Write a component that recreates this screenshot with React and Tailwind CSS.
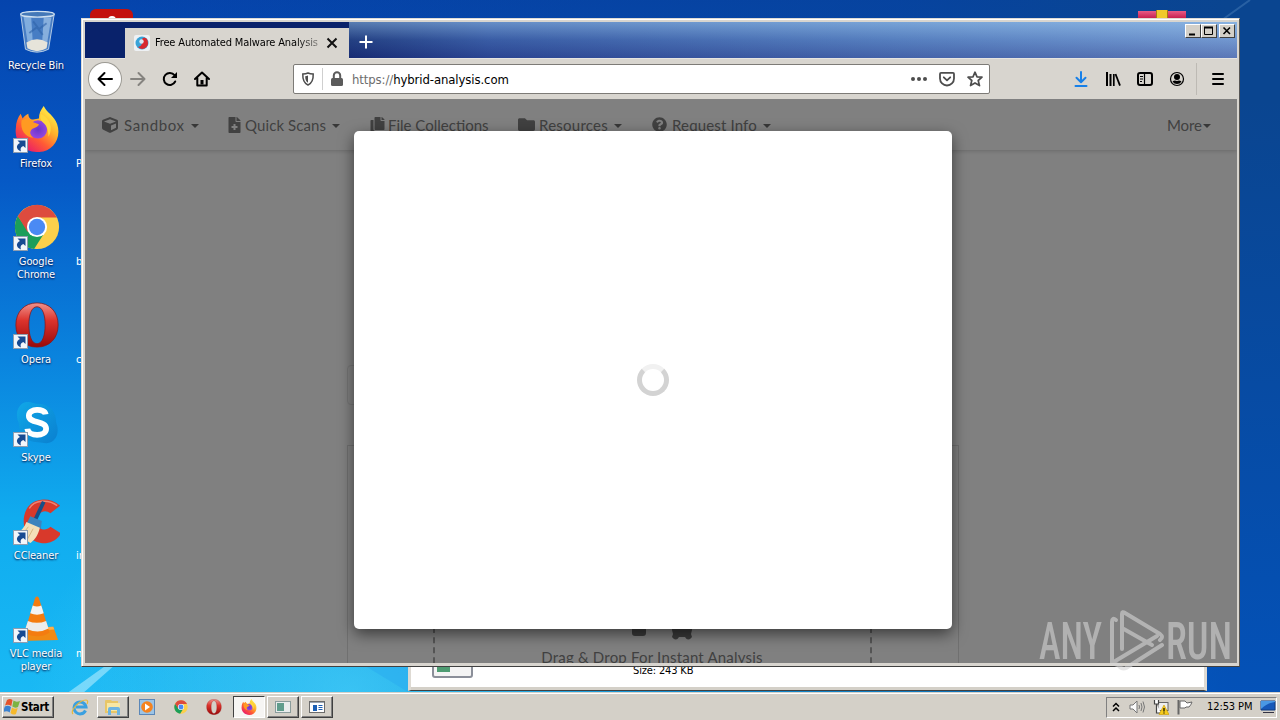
import { FaCube, FaFileMedical, FaCopy, FaFolder, FaQuestionCircle } from 'react-icons/fa'

const shortcuts = [
  { icon: RecycleIcon, label: 'Recycle Bin', link: false },
  { icon: FirefoxIcon, label: 'Firefox', link: true },
  { icon: ChromeIcon, label: 'Google Chrome', link: true },
  { icon: OperaIcon, label: 'Opera', link: true },
  { icon: SkypeIcon, label: 'Skype', link: true },
  { icon: CCleanerIcon, label: 'CCleaner', link: true },
  { icon: VlcIcon, label: 'VLC media player', link: true },
]

const secondColumn = ['', 'P', 'b', 'c', '', 'in', 'm']

function RecycleIcon() {
  return (
    <svg viewBox="0 0 48 48" className="w-12 h-12">
      <path d="M7 6 L12 43 Q24 50 36 43 L42 6 Z" fill="#5d8fca" fillOpacity=".75" />
      <path d="M10 9 L15 41 L20 43 L18 10 Z" fill="#a9cdf0" fillOpacity=".6" />
      <path d="M31 10 L29 42 L34 40 L39 10 Z" fill="#bdd9f3" fillOpacity=".55" />
      <path d="M20 14 L26 22 L34 16 M16 26 L24 20 L30 28" stroke="#2f62a8" strokeWidth="2" fill="none" opacity=".6" />
      <path d="M13 36 Q24 29 35 36 L34 42 Q24 48 14 42 Z" fill="#e6e4da" />
      <ellipse cx="24.5" cy="6.5" rx="17.5" ry="3" fill="#4478b8" stroke="#cfe0f0" strokeWidth="1.3" />
      <path d="M7 6 L12 43 Q24 49 36 43 L42 6" fill="none" stroke="#b9cfe6" strokeWidth="1" />
    </svg>
  )
}

function FirefoxIcon({ className = 'w-12 h-12' }) {
  return (
    <svg viewBox="0 0 48 48" className={className}>
      <defs>
        <linearGradient id="ffBody" x1=".85" y1=".1" x2=".2" y2=".95">
          <stop offset="0" stopColor="#fff04a" />
          <stop offset=".35" stopColor="#ffb02a" />
          <stop offset=".65" stopColor="#ff5a35" />
          <stop offset="1" stopColor="#e8186e" />
        </linearGradient>
        <radialGradient id="ffGlobe">
          <stop offset="0" stopColor="#6a35c8" />
          <stop offset="1" stopColor="#9448e0" />
        </radialGradient>
      </defs>
      <path d="M31 0 C34 7 42 10 45 19 C50 34 40 48 25 48 C10 48 0 37 2 23 C2 17 4 12 7 8 L9 13 C11 10 13 9 15 8 C15 12 17 14 20 14 L26 13 C26 8 28 4 31 0Z" fill="url(#ffBody)" />
      <circle cx="25" cy="24.500" r="9.500" fill="url(#ffGlobe)" />
      <path d="M8 15 C13 12 18 14 20 17 L26 19 C25 23 20 22 18 25 C16 28 17 30 20 33 C12 33 6 25 8 15Z" fill="#ff9a22" />
      <path d="M28 8 C38 13 41 23 36 32 C36 25 34 20 30 17 C27 14 27 11 28 8Z" fill="#ffd83c" />
    </svg>
  )
}

function ChromeIcon({ className = 'w-12 h-12' }) {
  return (
    <svg viewBox="0 0 48 48" className={className}>
      <circle cx="24" cy="24" r="23" fill="#fcd04b" />
      <path d="M4 12.500 A23 23 0 0 0 21 46.800 L32.500 29 L24 24 L15.600 29 Z" fill="#1b9e5a" />
      <path d="M4 12.500 L14 29 L24 24 L24 14 L44.700 14 A23 23 0 0 0 4 12.500Z" fill="#dd4b3e" />
      <circle cx="24" cy="24" r="10.500" fill="#fff" />
      <circle cx="24" cy="24" r="8.500" fill="#4a8af4" />
    </svg>
  )
}

function OperaIcon({ className = 'w-12 h-12' }) {
  return (
    <svg viewBox="0 0 48 48" className={className}>
      <defs>
        <linearGradient id="operaRed" x1="0" y1="0" x2="0" y2="1">
          <stop offset="0" stopColor="#f0938c" />
          <stop offset=".4" stopColor="#dc332c" />
          <stop offset="1" stopColor="#98090b" />
        </linearGradient>
      </defs>
      <path fillRule="evenodd" d="M24 1 C37 1 46 10 46 24 C46 38 37 47 24 47 C11 47 2 38 2 24 C2 10 11 1 24 1Z M24 5 C18 5 15.500 14 15.500 24 C15.500 34 18 43.500 24 43.500 C30 43.500 32.500 34 32.500 24 C32.500 14 30 5 24 5Z" fill="url(#operaRed)" stroke="#8d1515" strokeWidth=".8" />
    </svg>
  )
}

function SkypeIcon() {
  return (
    <svg viewBox="0 0 48 48" className="w-12 h-12">
      <defs>
        <linearGradient id="skypeBlue" x1="0" y1="0" x2="1" y2="1">
          <stop offset="0" stopColor="#10a8e8" />
          <stop offset="1" stopColor="#0a80d0" />
        </linearGradient>
      </defs>
      <path d="M14 2 C19 2 21 4 25 4 C37 4 44 12 44 24 C48 33 44 45 34 45 C30 45 29 44 25 44 C12 44 5 35 5 24 C0 14 5 2 14 2Z" fill="url(#skypeBlue)" />
      <path d="M33 15 C32 8.500 15.500 8.500 15.500 16.500 C15.500 25 33.500 21 33.500 30 C33.500 38.500 15 38.500 14 30" fill="none" stroke="#fff" strokeWidth="6" />
    </svg>
  )
}

function CCleanerIcon() {
  return (
    <svg viewBox="0 0 48 48" className="w-12 h-12">
      <path d="M48 8 C37 -2 19 0 13 12 C6 26 12 45 28 47 C36 48 44 45 49 37 L38 30 C32 36 24 32 24 24 C24 15 32 11 38 16 Z" fill="#d8392b" />
      <path d="M45 8 C36 1 21 2 16 11" stroke="#ee8574" strokeWidth="1.500" fill="none" />
      <path d="M31 4 L22 23" stroke="#174f87" strokeWidth="4" />
      <path d="M17 19 L29 24 L28 32 L13 27Z" fill="#3d83bd" />
      <path d="M13 25 L27 31 C25 40 20 45 17 47 L3 37 C8 34 11 30 13 25Z" fill="#f4dfb8" />
      <path d="M15 30 L8 39 M20 32 L14 43" stroke="#d7b680" strokeWidth="1" />
    </svg>
  )
}

function VlcIcon() {
  return (
    <svg viewBox="0 0 48 48" className="w-12 h-12">
      <path d="M6 34 L41 32 L46 46 L8 47Z" fill="#f08a14" />
      <path d="M6 34 L41 32 L42 35 L7 37Z" fill="#ffb04a" />
      <path d="M22 2 Q24 -1 26 2 L37 38 Q25 46 11 38Z" fill="#f47c10" />
      <path d="M19.500 10 Q24 12 28.500 10 L31 18 Q24 21 17 18Z" fill="#f3f3f3" />
      <path d="M14.500 26 Q24 30 33.500 26 L36 34 Q25 40 12 34Z" fill="#ececec" />
    </svg>
  )
}

function ShortcutArrow() {
  return (
    <svg viewBox="0 0 15 15" className="absolute left-0 bottom-0 w-[15px] h-[15px]">
      <rect x=".5" y=".5" width="14" height="14" fill="#f2f6fb" stroke="#8e9db0" />
      <path d="M4.500 2.500 L12.500 2.500 L12.500 10 L10.300 8 C7.500 9 7.200 11 8 13.500 C2.500 11 3 7 7 5Z" fill="#174a92" />
    </svg>
  )
}

function Desktop() {
  return (
    <div className="relative flex">
      <div className="w-[72px]">
        {shortcuts.map(({ icon: Icon, label, link }) => (
          <div key={label} className="h-[98px] pt-[7px] flex flex-col items-center">
            <div className="relative w-12 h-12 shrink-0 ml-0.5">
              <div className="scale-[.96]"><Icon /></div>
              {link && <div className="absolute left-0 bottom-0 w-[15px] h-[15px]"><ShortcutArrow /></div>}
            </div>
            <span className="mt-1 w-[62px] text-center text-[11px] leading-[13px] text-white tracking-[-0.1px] [text-shadow:0_1px_2px_#003]">{label}</span>
          </div>
        ))}
      </div>
      <div className="w-5 pl-1">
        {secondColumn.map((label, i) => (
          <div key={i} className="h-[98px] pt-[59px] text-[11px] leading-[13px] text-white">{label}</div>
        ))}
      </div>
    </div>
  )
}

function Caret() {
  return <span className="shrink-0 w-0 h-0 border-x-4 border-x-transparent border-t-4 border-t-[#383838] mt-[3px]" />
}

function NavBar() {
  return (
    <div className="h-[51px] shrink-0 flex items-center pb-0 pl-[17px] pr-[26px] text-[#414141] text-[15px] leading-5 whitespace-nowrap shadow-[0_1px_4px_rgba(0,0,0,0.18)] [font-family:Lato,'Open_Sans',sans-serif]">
      <div className="w-[126px] flex items-center">
        <FaCube className="w-4 h-4 mr-1.5" />
        <span className="w-[67px] tracking-[0.6px]">Sandbox</span>
        <Caret />
      </div>
      <div className="w-[142px] flex items-center">
        <FaFileMedical className="w-[13px] h-4 mr-1" />
        <span className="w-[87px] tracking-[0.1px]">Quick Scans</span>
        <Caret />
      </div>
      <div className="w-[148px] flex items-center">
        <FaCopy className="w-[15px] h-4 mr-[3px]" />
        <span>File Collections</span>
      </div>
      <div className="w-[134px] flex items-center">
        <FaFolder className="w-[17px] h-[17px] mr-1" />
        <span className="w-[75px] tracking-[0.250px]">Resources</span>
        <Caret />
      </div>
      <div className="flex items-center">
        <FaQuestionCircle className="w-[15px] h-[15px] mr-[5px]" />
        <span className="w-[91px] tracking-[0.150px]">Request Info</span>
        <Caret />
      </div>
      <div className="ml-auto flex items-center">
        <span className="w-9 tracking-[-0.1px]">More</span>
        <Caret />
      </div>
    </div>
  )
}

function Page() {
  return (
    <div className="relative h-[564px] bg-[#808080] overflow-hidden flex flex-col">
      <NavBar />
      <div className="mt-[215px] ml-[262px] w-[560px] h-[40px] shrink-0 border border-[#757575] rounded-sm" />
      <div className="mt-10 ml-[262px] w-[612px] h-[300px] shrink-0 border border-[#707070] flex justify-center">
        <div className="w-[439px] mt-10 -ml-0.5 border-x-2 border-dashed border-[#555] flex flex-col items-center pt-[118px]">
          <div className="h-[32px] flex items-end gap-[26px] pl-[19px] text-[#3b3b3b]">
            <svg viewBox="0 0 14 30" className="w-[14px] h-[30px]"><rect width="14" height="30" rx="3" fill="currentColor" /></svg>
            <svg viewBox="0 0 20 34" className="w-5 h-[34px] translate-y-1"><path d="M0 0H20V24L19 28L20 31Q16 36 13 31H7Q4 36 0 31L1 28L0 24Z" fill="currentColor" /></svg>
          </div>
          <span className="mt-[11px] text-[15px] leading-5 text-[#404040] whitespace-nowrap tracking-[0.2px] [font-family:Lato,'Open_Sans',sans-serif]">Drag &amp; Drop For Instant Analysis</span>
        </div>
      </div>

      {/* Modal */}
      <div className="absolute left-[269px] top-8 w-[598px] h-[498px] rounded-[5px] bg-white shadow-[0_5px_15px_rgba(0,0,0,0.55)] flex items-center justify-center">
        <div className="w-8 h-8 rounded-full border-[5px] border-[#d3d3d3] border-t-[#f1f1f1]" />
      </div>
    </div>
  )
}

function ToolButton({ children }) {
  return <div className="w-8 h-8 flex items-center justify-center">{children}</div>
}

function TitleBar() {
  return (
    <div className="h-9 flex bg-[linear-gradient(to_bottom,rgba(165,210,245,0.5),rgba(130,165,215,0.2)_50%,rgba(50,55,130,0.3)),linear-gradient(to_right,#0a246a_0%,#0a246a_22%,#274a98_35%,#4a74b8_70%,#6d93cd_100%)]">
      <div className="w-10 bg-[#09226b]" />
      <div className="w-[224px] bg-[#09226b] pt-1">
        <div className="h-8 mt-0.5 bg-[#d8d5cf] flex items-center pl-[9px] pb-0.5">
          <svg viewBox="0 0 16 16" className="w-4 h-4">
            <rect width="16" height="16" rx="2" fill="#eef1f4" />
            <circle cx="8" cy="8" r="6.500" fill="#39a3d8" />
            <path d="M8 4 Q10 1.500 13 4 Q15.500 9 12 12.500 Q8 15.500 4 12 Q9 11.500 8 4Z" fill="#d8292f" />
            <circle cx="7.500" cy="6.500" r="2.200" fill="#d9eaf4" />
          </svg>
          <span className="ml-[5px] w-[166px] overflow-hidden whitespace-nowrap text-[11px] tracking-[-0.150px] text-black [mask-image:linear-gradient(to_right,#000_85%,rgba(0,0,0,0.3))]">Free Automated Malware Analysis</span>
          <svg viewBox="0 0 12 12" className="ml-[5px] w-3 h-3"><path d="M1.500 1.500 L10.500 10.500 M10.500 1.500 L1.500 10.500" stroke="#111" strokeWidth="2" /></svg>
        </div>
      </div>
      <svg viewBox="0 0 16 16" className="w-4 h-4 ml-[9px] mt-3"><path d="M8 1.500V14.500M1.500 8H14.500" stroke="#fff" strokeWidth="2" /></svg>
      <div className="ml-auto mt-0.5 mr-0.5 flex h-[14px]">
        {['min', 'max', 'close'].map((name) => (
          <div key={name} className={`w-4 h-[14px] bg-[#d4d0c8] border border-t-white border-l-white border-r-[#404040] border-b-[#404040] flex items-center justify-center ${name === 'close' ? 'ml-0.5' : ''}`}>
            <svg viewBox="0 0 12 10" className="w-3 h-[10px]" fill="none" stroke="#000" strokeWidth="2">
              {name === 'min' && <path d="M2 8.500H8" />}
              {name === 'max' && <><path d="M1.500 1.500H9.500V8.500H1.500Z" strokeWidth="1" /><path d="M1 1.500H10" /></>}
              {name === 'close' && <path d="M2.500 1.500L9 8M9 1.500L2.500 8" strokeWidth="1.600" />}
            </svg>
          </div>
        ))}
      </div>
    </div>
  )
}

function Toolbar() {
  return (
    <div className="h-[41px] bg-[#d8d5cf] border-t border-[#e6e4e0] flex items-center pl-1">
      <div className="w-8 h-8 rounded-full bg-white ring-1 ring-[#9b9993] flex items-center justify-center mr-px">
        <svg viewBox="0 0 16 16" className="w-4 h-4" fill="none" stroke="#000" strokeWidth="2" strokeLinecap="round" strokeLinejoin="round"><path d="M15 8H1.500M7.500 2L1.500 8L7.500 14" /></svg>
      </div>
      <ToolButton>
        <svg viewBox="0 0 16 16" className="w-4 h-4" fill="none" stroke="#85837f" strokeWidth="2" strokeLinecap="round" strokeLinejoin="round"><path d="M1 8H14.500M8.500 2L14.500 8L8.500 14" /></svg>
      </ToolButton>
      <ToolButton>
        <svg viewBox="0 0 16 16" className="w-4 h-4" fill="none" stroke="#000" strokeWidth="2" strokeLinecap="round"><path d="M13.200 10.500A6 6 0 1 1 12.500 4.200" /><path d="M15 1V7H9Z" fill="#000" stroke="none" /></svg>
      </ToolButton>
      <ToolButton>
        <svg viewBox="0 0 16 16" className="w-4 h-4" fill="none" stroke="#000" strokeWidth="2" strokeLinecap="round" strokeLinejoin="round"><path d="M1 8L8 1.500L15 8M3.300 7V14.500H12.700V7" /><path d="M8 9V13.500" strokeWidth="3" strokeLinecap="butt" /></svg>
      </ToolButton>

      <div className="ml-[75px] w-[697px] h-[30px] bg-white border border-[#7d7b77] rounded-[2px] flex items-center">
        <svg viewBox="0 0 16 16" className="ml-1.5 w-4 h-4" fill="none" stroke="#4d4d4d" strokeWidth="1.500"><path d="M8 2C6 3 4.500 3 2.800 3C2.600 8 3.500 12 8 14C12.500 12 13.400 8 13.200 3C11.500 3 10 3 8 2Z" /><path d="M8 4.500C7 5 6 5.200 5.200 5.200C5.200 8.500 6 10.500 8 11.800Z" fill="#4d4d4d" stroke="none" /></svg>
        <div className="ml-[6px] w-px h-[22px] bg-[#cfcfcf]" />
        <svg viewBox="0 0 16 16" className="ml-1.5 w-4 h-4" fill="#5b5b5b"><rect x="2" y="7" width="12" height="8" rx="1.500" /><path d="M4.800 8V4.500A3.200 3.200 0 0 1 11.200 4.500V8" fill="none" stroke="#5b5b5b" strokeWidth="2" /></svg>
        <span className="ml-[7px] mt-px text-[13px] tracking-[-0.1px] text-[#6d6d6d] whitespace-nowrap">https://<span className="text-black">hybrid-analysis.com</span></span>
        <div className="ml-auto mr-1.5 flex gap-3 text-[#4d4d4d]">
          <svg viewBox="0 0 16 16" className="w-4 h-4" fill="currentColor"><circle cx="2" cy="8" r="2" /><circle cx="8" cy="8" r="2" /><circle cx="14" cy="8" r="2" /></svg>
          <svg viewBox="0 0 16 16" className="w-4 h-4" fill="none" stroke="currentColor" strokeWidth="1.800" strokeLinecap="round" strokeLinejoin="round"><path d="M2 1.800H14Q15 1.800 15 3V7.500A7 7 0 0 1 1 7.500V3Q1 1.800 2 1.800Z" /><path d="M4.800 6.300L8 9.400L11.200 6.300" /></svg>
          <svg viewBox="0 0 16 16" className="w-4 h-4" fill="none" stroke="currentColor" strokeWidth="1.700" strokeLinejoin="round"><path d="M8 1.200L10 5.800L15 6.200L11.200 9.500L12.500 14.600L8 11.900L3.500 14.600L4.800 9.500L1 6.200L6 5.800Z" /></svg>
        </div>
      </div>

      <div className="ml-[75px] flex items-center">
        <ToolButton>
          <svg viewBox="0 0 16 16" className="w-4 h-4" fill="none" stroke="#1780e8" strokeWidth="2" strokeLinecap="round" strokeLinejoin="round"><path d="M8 1V11M3.500 6.800L8 11.200L12.500 6.800M2.500 15H13.500" /></svg>
        </ToolButton>
        <ToolButton>
          <svg viewBox="0 0 16 16" className="w-4 h-4" fill="none" stroke="#000" strokeWidth="2"><path d="M2 1V15M5.500 3V15" /><path d="M8.800 3V15" strokeWidth="1.700" /><path d="M10.500 3L15 14.600" strokeWidth="1.800" /></svg>
        </ToolButton>
        <ToolButton>
          <svg viewBox="0 0 16 16" className="w-4 h-4" fill="none" stroke="#000" strokeWidth="2"><rect x="1" y="2" width="14" height="12" rx="2" /><path d="M7.500 2V14" strokeWidth="1.200" /><path d="M3 5.500H6M3 8H6M3 10.500H5" strokeWidth="1" /></svg>
        </ToolButton>
        <ToolButton>
          <svg viewBox="0 0 16 16" className="w-4 h-4"><circle cx="8" cy="8" r="6.500" fill="none" stroke="#000" strokeWidth="1.200" /><circle cx="8" cy="6" r="3" /><path d="M3.500 10.500Q5.500 8.800 8 10Q10.500 8.800 12.500 10.500Q11 13 8 13Q5 13 3.500 10.500Z" /></svg>
        </ToolButton>
        <div className="ml-[3px] mr-[5px] w-px h-8 bg-[#bdbab4]" />
        <ToolButton>
          <svg viewBox="0 0 16 16" className="w-4 h-4" fill="none" stroke="#000" strokeWidth="2" strokeLinecap="round"><path d="M3 3H13M3 8H13M3 13H13" /></svg>
        </ToolButton>
      </div>
    </div>
  )
}

function TaskItem({ children, state }) {
  if (state === 'flat') return <div className="w-[33.500px] flex items-center justify-center">{children}</div>
  return (
    <div className={`w-8 h-[22px] mr-0.5 flex items-center justify-center border ${state === 'pressed' ? 'bg-[#f6f5f3] border-[#404040] border-r-white border-b-white' : 'border-white border-r-[#404040] border-b-[#404040] shadow-[inset_-1px_-1px_#808080]'}`}>
      {children}
    </div>
  )
}

function Taskbar() {
  return (
    <div className="absolute left-0 top-[692px] w-[1280px] h-7 bg-[#d4d0c8] border-t border-[#d4d0c8] shadow-[inset_0_1px_#fff] flex items-center pt-px pl-0.5 pr-[3px] text-black">
      <div className="w-[52px] h-[22px] border border-white border-r-[#404040] border-b-[#404040] shadow-[inset_-1px_-1px_#808080] flex items-center">
        <svg viewBox="0 0 16 16" className="w-4 h-4 ml-px shrink-0">
          <path d="M3 1Q6 -1 8.500 1L7.300 7Q4 5 1 6.500Z" fill="#e4532a" />
          <path d="M9.500 1.500Q12 3.500 16 2L14 8Q11 9.500 8.300 7.500Z" fill="#7cb342" />
          <path d="M.8 7.500Q4 6 7 8L5.700 13.500Q3 11.500 -1 13Z" fill="#3b82d0" />
          <path d="M8 8.500Q10 10.500 13.700 9L12 15Q9 16.500 6.500 14Z" fill="#f6b92c" />
        </svg>
        <span className="ml-px mt-px text-[11.500px] font-bold tracking-[-0.300px]">Start</span>
      </div>
      <div className="ml-[9px] flex items-center h-[22px]">
        <TaskItem state="flat">
          <svg viewBox="0 0 18 18" className="w-[18px] h-[18px]" fill="none"><path d="M14.500 12.500A6 6 0 1 1 15 9H5" stroke="#3ba0e0" strokeWidth="3" /><path d="M2 16C-1 13 8 2 15 2C17 2 17 4 16 6" stroke="#e7b83b" strokeWidth="1.200" /></svg>
        </TaskItem>
        <TaskItem>
          <svg viewBox="0 0 18 18" className="w-[18px] h-[18px]"><path d="M1 3Q1 2 2 2H7L8 3H14V15H1Z" fill="#e8c667" /><path d="M3 5H16V13H3Z" fill="#f7e7a4" /><path d="M4 17V11Q4 9 6 9H14Q16 9 16 11V17H13V12H7V17Z" fill="#6db4e2" /></svg>
        </TaskItem>
        <TaskItem state="flat">
          <svg viewBox="0 0 16 16" className="w-4 h-4"><rect x=".5" y=".5" width="15" height="15" fill="#9cc4e6" stroke="#5b87b8" /><circle cx="8" cy="8" r="5.800" fill="#f5831f" /><path d="M6 4.500L11 8L6 11.500Z" fill="#fff" /></svg>
        </TaskItem>
        <TaskItem state="flat"><ChromeIcon className="w-[14px] h-[14px]" /></TaskItem>
        <TaskItem state="flat"><OperaIcon className="w-4 h-4" /></TaskItem>
        <div className="w-0.5" />
        <TaskItem state="pressed"><FirefoxIcon className="w-4 h-4" /></TaskItem>
        <TaskItem>
          <svg viewBox="0 0 16 14" className="w-4 h-[14px]"><rect x=".5" y="1.500" width="15" height="11" fill="#e8ecec" stroke="#8a9c9c" /><rect x="2" y="3" width="7" height="8" fill="#5f9c8c" /></svg>
        </TaskItem>
        <TaskItem>
          <svg viewBox="0 0 16 14" className="w-4 h-[14px]"><rect x=".5" y="1.500" width="15" height="11" fill="#fff" stroke="#6b6b6b" /><path d="M1 2.500H15" stroke="#9aa6b4" /><rect x="4" y="5" width="4" height="6" fill="#1c5fb4" /><path d="M9.500 5.500H13.500M9.500 7.500H13.500M9.500 9.500H13.500" stroke="#1c5fb4" /></svg>
        </TaskItem>
      </div>

      {/* System tray */}
      <div className="ml-auto w-[171px] h-[21px] border border-[#808080] border-r-white border-b-white flex items-center">
        <svg viewBox="0 0 8 10" className="ml-[5px] w-2 h-[10px]" fill="none" stroke="#000" strokeWidth="1.500"><path d="M1 4.500L4 1.500L7 4.500M1 9L4 6L7 9" /></svg>
        <svg viewBox="0 0 16 16" className="ml-[9px] w-4 h-4" fill="none" stroke="#777"><path d="M1 6H4L8 2V14L4 10H1Z" fill="#fafafa" /><path d="M10 6Q11 8 10 10M12 4Q14 8 12 12M14 2.500Q17 8 14 13.500" /></svg>
        <svg viewBox="0 0 16 16" className="ml-2 w-4 h-4"><rect x="5" y="3.500" width="10" height="8" fill="#eee" stroke="#666" /><path d="M1.500 1V5H5.500V1M3.500 5V14H8" fill="#fff" stroke="#444" strokeWidth="1.200" /><path d="M11 6L16 15.500H6Z" fill="#f6cb1c" stroke="#c99a00" strokeWidth=".6" /><path d="M11 9V12.500M11 13.500V14.500" stroke="#000" strokeWidth="1.200" /></svg>
        <svg viewBox="0 0 16 16" className="ml-2 w-4 h-4" fill="#fff" stroke="#666"><path d="M1.500 1V15.500" strokeWidth="2" /><path d="M3 2H8L10 4L15 3Q14 6 12 8H9L8 9H3Z" /></svg>
        <span className="ml-[14px] mt-px text-[11px] tracking-[-0.1px] whitespace-nowrap w-[46px]">12:53 PM</span>
        <svg viewBox="0 0 16 14" className="ml-[7px] w-4 h-[14px]"><path d="M1 1H15V10H1Z" fill="#1758b8" stroke="#123c80" /><path d="M1 9Q7 3 15 2V1H1Z" fill="#4a98e4" /><path d="M3 12.500H14" stroke="#334" /></svg>
      </div>
    </div>
  )
}

function Watermark() {
  return (
    <svg viewBox="0 0 200 66" className="absolute left-[1036px] top-[608px] w-[200px] h-[66px]" opacity=".6">
      <g fill="#d2d2d2" fontFamily="Roboto, sans-serif" fontSize="51" fontWeight="500">
        <text x="3" y="51" textLength="63" lengthAdjust="spacingAndGlyphs">ANY</text>
        <text x="130" y="51" textLength="66" lengthAdjust="spacingAndGlyphs">RUN</text>
      </g>
      <g fill="none" stroke="#d6d6d6" strokeWidth="4" strokeLinejoin="round" strokeLinecap="round">
        <path d="M80 12Q76 9 76 14V55L121 28" />
        <path d="M86 41V6Q86 3 89 5L124 26Q128 29 124 32" />
        <path d="M86 20L116 37" />
        <path d="M126 37L90 60Q86 62 82 57L76 55" />
      </g>
    </svg>
  )
}

function Wallpaper() {
  return (
    <>
      <div className="absolute left-0 top-[440px] w-[700px] h-[252px] bg-[radial-gradient(ellipse_at_50%_100%,rgba(80,215,255,0.6),transparent_65%)]" />
      <div className="absolute left-[1206px] top-[100px] w-[74px] h-[592px] bg-[linear-gradient(to_bottom,transparent,rgba(0,88,205,0.65))]" />
      <svg viewBox="0 0 1280 720" className="absolute left-0 top-0 w-[1280px] h-[720px]">
        <path d="M66 694L108 664H116L82 694Z" fill="#bff0ff" opacity=".55" />
        <path d="M362 664H408V692Z" fill="#2baef0" opacity=".6" />
        <path d="M1222 20L1250 0" stroke="#6f9fd0" strokeWidth="2" opacity=".3" />
      </svg>
    </>
  )
}

export default function App() {
  return (
    <div className="relative w-[1280px] h-[720px] overflow-hidden bg-[linear-gradient(to_right,transparent_6%,rgba(8,66,145,0.5)_70%,#0a4590_96%),linear-gradient(to_bottom,#0544ad_0%,#0659c6_25%,#0a84de_50%,#10acef_72%,#1bbbf5_100%)] [font-family:'DejaVu_Sans_Condensed','DejaVu_Sans',sans-serif] [font-stretch:condensed]">
      <Wallpaper />
      <div className="absolute left-[90px] top-[9px] w-[43px] h-10 rounded-md bg-[#c3110e]"><div className="mx-auto mt-[7px] w-2 h-3 rounded-full border-2 border-white" /></div>
      <div className="absolute left-[1138px] top-[11px] w-12 h-10 bg-[linear-gradient(#e85b86,#c21848_8px)] flex justify-center"><div className="w-3 h-3 -mt-px bg-[#f0c92c] border-x border-[#a87a10]" /></div>
      <Desktop />

      {/* Explorer window behind the browser */}
      <div className="absolute left-[408px] top-[560px] w-[799px] h-[131px] bg-white border-x-[3px] border-x-[#dedad3] border-b border-b-[#404040] shadow-[inset_0_-3px_#d4d0c8] flex items-end">
        <div className="ml-[21px] mb-3 w-[41px] h-10 rounded-[3px] border-2 border-[#8b8f99] bg-[#f4f4f4] pl-[3px] pt-5"><div className="w-[13px] h-3 bg-[#4e9c72]" /></div>
        <span className="ml-[160px] mb-3 text-[11px] leading-[14px] tracking-[-0.150px] text-black whitespace-nowrap">Size: 243 KB</span>
      </div>

      <div className="absolute left-[81px] top-[18px] w-[1159px] h-[649px] bg-[#d8d5cf] border border-[#dedbd5] border-r-[#555] border-b-[#404040] pl-[3px] pt-[3px] pr-[2px] shadow-[inset_1px_1px_#fff]">
        <TitleBar />
        <Toolbar />
        <Page />
      </div>

      <Taskbar />
      <Watermark />
    </div>
  )
}
